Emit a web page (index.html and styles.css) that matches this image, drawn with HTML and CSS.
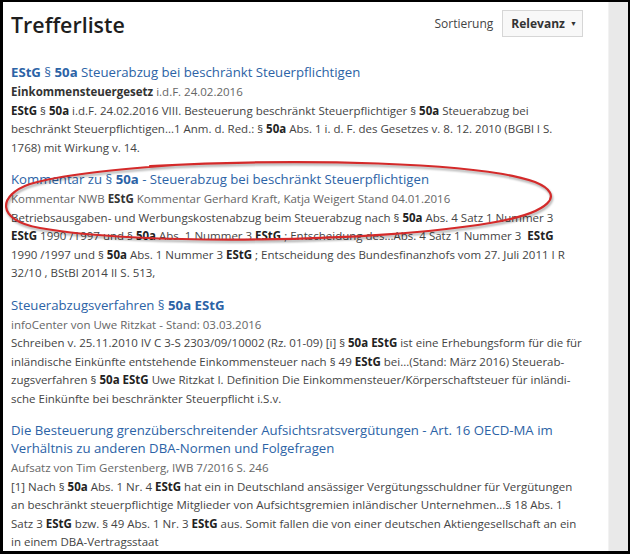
FILE: index.html
```html
<!DOCTYPE html>
<html lang="de">
<head>
    <meta charset="UTF-8">
    <title>Trefferliste</title>
    <link rel="stylesheet" href="styles.css">
</head>
<body>
    <div class="frame">
        <main class="content">
            <!-- Kopfzeile mit Sortierung -->
            <header class="head">
                <h1>Trefferliste</h1>
                <div class="sort">
                    <span class="sort-label">Sortierung</span>
                    <button class="sort-button">Relevanz <span class="caret">&#9660;</span></button>
                </div>
            </header>

            <ol class="results">
                <li class="result">
                    <h2><a href="#"><b>EStG</b> § <b>50a</b> Steuerabzug bei beschränkt Steuerpflichtigen</a></h2>
                    <div class="meta"><b>Einkommensteuergesetz</b> i.d.F. 24.02.2016</div>
                    <p class="snippet"><b>EStG</b> § <b>50a</b> i.d.F. 24.02.2016 VIII. Besteuerung beschränkt Steuerpflichtiger § <b>50a</b> Steuerabzug bei beschränkt Steuerpflichtigen...1 Anm. d. Red.: § <b>50a</b> Abs. 1 i. d. F. des Gesetzes v. 8. 12. 2010 (BGBl I S. 1768) mit Wirkung v. 14.</p>
                </li>
                <li class="result">
                    <h2><a href="#">Kommentar zu § <b>50a</b> - Steuerabzug bei beschränkt Steuerpflichtigen</a></h2>
                    <div class="meta">Kommentar NWB <b>EStG</b> Kommentar Gerhard Kraft, Katja Weigert Stand 04.01.2016</div>
                    <p class="snippet">Betriebsausgaben- und Werbungskostenabzug beim Steuerabzug nach § <b>50a</b> Abs. 4 Satz 1 Nummer 3 <b>EStG</b>&nbsp;1990 /1997 und § <b>50a</b> Abs. 1 Nummer 3 <b>EStG</b> ; Entscheidung des...Abs. 4 Satz 1 Nummer 3&nbsp; <b>EStG</b> 1990&nbsp;/1997 und § <b>50a</b> Abs. 1 Nummer 3 <b>EStG</b> ; Entscheidung des Bundesfinanzhofs vom 27. Juli 2011 I R 32/10 , BStBl 2014 II S. 513,</p>
                </li>
                <li class="result">
                    <h2><a href="#">Steuerabzugsverfahren § <b>50a EStG</b></a></h2>
                    <div class="meta">infoCenter von Uwe Ritzkat - Stand: 03.03.2016</div>
                    <p class="snippet">Schreiben v. 25.11.2010 IV C 3-S 2303/09/10002 (Rz. 01-09) [i] § <b>50a EStG</b> ist eine Erhebungsform für die für inländische Einkünfte entstehende Einkommensteuer nach § 49 <b>EStG</b> bei...(Stand: März 2016) Steuerab­zugsverfahren § <b>50a EStG</b> Uwe Ritzkat I. Definition Die Einkommensteuer/Körperschaftsteuer für inländi­sche Einkünfte bei beschränkter Steuerpflicht i.S.v.</p>
                </li>
                <li class="result">
                    <h2><a href="#">Die Besteuerung grenzüberschreitender Aufsichtsratsvergütungen - Art. 16 OECD-MA im Verhältnis zu anderen DBA-Normen und Folgefragen</a></h2>
                    <div class="meta">Aufsatz von Tim Gerstenberg, IWB 7/2016 S. 246</div>
                    <p class="snippet">[1] Nach § <b>50a</b> Abs. 1 Nr. 4 <b>EStG</b> hat ein in Deutschland ansässiger Vergütungsschuldner für Vergütungen an beschränkt steuerpflichtige Mitglieder von Aufsichtsgremien inländischer Unternehmen...§ 18 Abs. 1 Satz 3 <b>EStG</b> bzw. § 49 Abs. 1 Nr. 3 <b>EStG</b> aus. Somit fallen die von einer deutschen Aktiengesellschaft an ein in einem DBA-Vertragsstaat</p>
                </li>
            </ol>
        </main>
        <aside class="rail"></aside>

        <!-- rote Markierung um den zweiten Treffer -->
        <svg class="marker" width="630" height="554" viewBox="0 0 630 554">
            <path d="M 150 166 C 300 158, 480 162, 535 182 C 567 195, 550 213, 490 223 C 380 242, 140 246, 40 228 C -5 220, -2 195, 30 184 C 60 175, 110 170, 175 165"
                  fill="none" stroke="#d42a2a" stroke-width="2.2" stroke-linecap="round"/>
        </svg>
    </div>
</body>
</html>
```

FILE: styles.css
```css
body {
    margin: 0;
    font-family: "Open Sans", "Liberation Sans", sans-serif;
    color: #444;
    background: #000;
}

.frame {
    position: relative;
    display: flex;
    width: 625px;
    height: 549px;
    border-style: solid;
    border-color: #000;
    border-width: 2px 2px 3px 3px;
    background: #fff;
    overflow: hidden;
}

.content {
    flex: 1;
    padding: 0 25px 0 8px;
}

.rail {
    width: 19px;
    background: #e9e9e9;
    border-left: 1px solid #f2f2f2;
}

.head {
    display: flex;
    justify-content: space-between;
    align-items: flex-start;
    height: 53px;
    padding-top: 8px;
}

h1 {
    margin: 0;
    font-size: 21.4px;
    line-height: 30px;
    font-weight: 600;
    color: #1e1e1e;
}

.sort {
    display: flex;
    align-items: center;
    gap: 9px;
}

.sort-label {
    font-size: 12px;
    color: #444;
}

.sort-button {
    font-family: inherit;
    font-size: 12px;
    font-weight: 700;
    color: #333;
    background: #f8f8f8;
    border: 1px solid #d6d6d6;
    padding: 0 5px 0 8px;
    height: 27px;
}

.caret {
    font-size: 7px;
    margin-left: 2px;
    vertical-align: 2px;
}

.results {
    list-style: none;
    margin: 0;
    padding: 0;
}

.result {
    margin-bottom: 13px;
}

.result h2 {
    margin: 0 0 2px;
    font-size: 13.2px;
    font-weight: 400;
    line-height: 18px;
}

.result h2 a {
    color: #2c63a6;
    text-decoration: none;
}

.meta {
    font-size: 11.5px;
    line-height: 18.5px;
    color: #666;
}

.meta b {
    color: #333;
}

.snippet {
    margin: 0;
    font-size: 11.5px;
    line-height: 18.5px;
}

.snippet b {
    color: #222;
}

.marker {
    position: absolute;
    left: -3px;
    top: -2px;
    pointer-events: none;
    filter: drop-shadow(1px 2px 1px rgba(0, 0, 0, 0.35));
}
```
